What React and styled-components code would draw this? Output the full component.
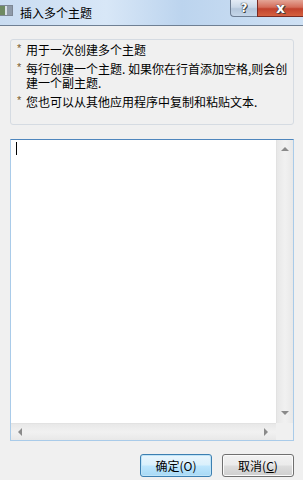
import React from "react";
import styled, { createGlobalStyle } from "styled-components";

const Global = createGlobalStyle`
  html, body { margin: 0; padding: 0; background: #f0f0f0; }
  body { font-family: "Noto Sans CJK SC", "Noto Sans", sans-serif; font-size: 12px; color: #000; }
`;

const Window = styled.div`
  width: 303px;
  height: 480px;
  display: flex;
  flex-direction: column;
  background: #f0f0f0;
  overflow: hidden;
`;

const TitleBar = styled.div`
  height: 25px;
  flex: none;
  display: flex;
  align-items: flex-start;
  background: linear-gradient(90deg, #c9dcf1 0%, #d8e7f7 35%, #bcd4ee 60%, #cfe1f4 100%);
  border-bottom: 1px solid #6f8094;
`;

const AppIcon = styled.div`
  width: 13px;
  height: 11px;
  margin: 5px 0 0 0;
  flex: none;
  background: linear-gradient(90deg, #6e8a62 0 40%, #d8dfe6 40% 60%, #8e9aa8 60%);
  border: 1px solid #7d8794;
  border-left: none;
  box-sizing: border-box;
`;

const Title = styled.div`
  margin: 5px 0 0 7px;
  line-height: 16px;
  font-size: 12px;
  color: #000;
  flex: 1;
`;

const CaptionButtons = styled.div`
  display: flex;
  height: 17px;
`;

const CapBtn = styled.div`
  height: 17px;
  box-sizing: border-box;
  display: flex;
  align-items: center;
  justify-content: center;
  color: #fff;
  font-family: "DejaVu Sans", sans-serif;
  font-weight: bold;
  border: 1px solid ${(p) => (p.$close ? "#7a2a22" : "#6d7d93")};
  border-top: none;
  border-right: none;
  width: ${(p) => (p.$close ? "46px" : "27px")};
  border-radius: ${(p) => (p.$close ? "0" : "0 0 0 4px")};
  background: ${(p) =>
    p.$close
      ? "linear-gradient(180deg, #e4a596 0%, #d46d5a 45%, #c1422d 55%, #d5613f 100%)"
      : "linear-gradient(180deg, #e3ebf5 0%, #cad8e8 45%, #b4c6db 55%, #c5d6e9 100%)"};
  text-shadow: 0 0 1px #333, 0 0 1px #333, 1px 1px 0 #444;
  font-size: ${(p) => (p.$close ? "14px" : "12px")};
`;

const Body = styled.div`
  flex: 1;
  display: flex;
  flex-direction: column;
  padding: 13px 9px 5px 10px;
`;

const InfoBox = styled.div`
  height: 86px;
  box-sizing: border-box;
  border: 1px solid #d5dbe2;
  border-radius: 3px;
  background: #f0f0f0;
  padding: 3px 4px 0 5px;
  display: flex;
  flex-direction: column;
  gap: 5px;
`;

const Item = styled.div`
  display: flex;
  font-size: 12px;
  color: #000;
`;

const Star = styled.span`
  width: 9px;
  flex: none;
  color: #7a5b2c;
  font-family: "Liberation Sans", sans-serif;
  font-size: 11px;
  line-height: 11px;
  padding-left: 1px;
`;

const ItemText = styled.div`
  flex: 1;
  display: flex;
  flex-direction: column;
`;

const Line = styled.span`
  display: block;
  height: 14px;
  line-height: 14px;
  white-space: nowrap;
`;

const TextArea = styled.div`
  margin-top: 14px;
  height: 302px;
  box-sizing: border-box;
  border: 1px solid #a9cbe9;
  border-top-color: #4e86bd;
  background: #fff;
  display: grid;
  grid-template-columns: 1fr 17px;
  grid-template-rows: 1fr 17px;
`;

const Content = styled.div`
  padding: 2px 0 0 5px;
`;

const Caret = styled.div`
  width: 1px;
  height: 13px;
  background: #000;
`;

const VScroll = styled.div`
  display: flex;
  flex-direction: column;
  justify-content: space-between;
  align-items: center;
  background: linear-gradient(90deg, #e8e8e8, #f1f1f1 50%, #e8e8e8);
  border-left: 1px solid #e2e2e2;
  padding: 7px 0 8px;
  box-sizing: border-box;
`;

const HScroll = styled.div`
  display: flex;
  justify-content: space-between;
  align-items: center;
  background: linear-gradient(180deg, #e8e8e8, #f1f1f1 50%, #e8e8e8);
  border-top: 1px solid #e2e2e2;
  padding: 0 8px 0 7px;
  box-sizing: border-box;
`;

const Corner = styled.div`
  background: #f0f0f0;
`;

const Arrow = styled.div`
  width: 0;
  height: 0;
  border-style: solid;
  border-color: transparent;
  ${(p) =>
    p.$dir === "up"
      ? "border-width: 0 4px 4px 4px; border-bottom-color: #8a8a8a;"
      : p.$dir === "down"
      ? "border-width: 4px 4px 0 4px; border-top-color: #8a8a8a;"
      : p.$dir === "left"
      ? "border-width: 4px 4px 4px 0; border-right-color: #8a8a8a;"
      : "border-width: 4px 0 4px 4px; border-left-color: #8a8a8a;"}
`;

const Buttons = styled.div`
  margin-top: 13px;
  display: flex;
  justify-content: flex-end;
  gap: 10px;
`;

const Button = styled.button`
  width: 72px;
  height: 23px;
  box-sizing: border-box;
  margin: 0;
  padding: 0;
  border-radius: 3px;
  font-family: "Noto Sans CJK SC", "Noto Sans", sans-serif;
  font-size: 12px;
  color: #000;
  line-height: 20px;
  border: 1px solid ${(p) => (p.$primary ? "#3c7fb1" : "#707070")};
  background: ${(p) =>
    p.$primary
      ? "linear-gradient(180deg, #eaf6fd 0%, #d9f0fc 48%, #bee6fd 52%, #a7d9f5 100%)"
      : "linear-gradient(180deg, #f2f2f2 0%, #ebebeb 48%, #dddddd 52%, #cfcfcf 100%)"};
  box-shadow: inset 0 0 0 1px ${(p) => (p.$primary ? "#bfe4f8" : "#fbfbfb")};
`;

const U = styled.span`
  text-decoration: underline;
`;

export default function App() {
  return (
    <>
      <Global />
      <Window>
        <TitleBar>
          <AppIcon />
          <Title>插入多个主题</Title>
          <CaptionButtons>
            <CapBtn>?</CapBtn>
            <CapBtn $close>x</CapBtn>
          </CaptionButtons>
        </TitleBar>
        <Body>
          <InfoBox>
            <Item>
              <Star>*</Star>
              <ItemText>
                <Line>用于一次创建多个主题</Line>
              </ItemText>
            </Item>
            <Item>
              <Star>*</Star>
              <ItemText>
                <Line>每行创建一个主题. 如果你在行首添加空格,则会创</Line>
                <Line>建一个副主题.</Line>
              </ItemText>
            </Item>
            <Item>
              <Star>*</Star>
              <ItemText>
                <Line>您也可以从其他应用程序中复制和粘贴文本.</Line>
              </ItemText>
            </Item>
          </InfoBox>
          <TextArea>
            <Content>
              <Caret />
            </Content>
            <VScroll>
              <Arrow $dir="up" />
              <Arrow $dir="down" />
            </VScroll>
            <HScroll>
              <Arrow $dir="left" />
              <Arrow $dir="right" />
            </HScroll>
            <Corner />
          </TextArea>
          <Buttons>
            <Button $primary>确定(O)</Button>
            <Button>
              取消(<U>C</U>)
            </Button>
          </Buttons>
        </Body>
      </Window>
    </>
  );
}
